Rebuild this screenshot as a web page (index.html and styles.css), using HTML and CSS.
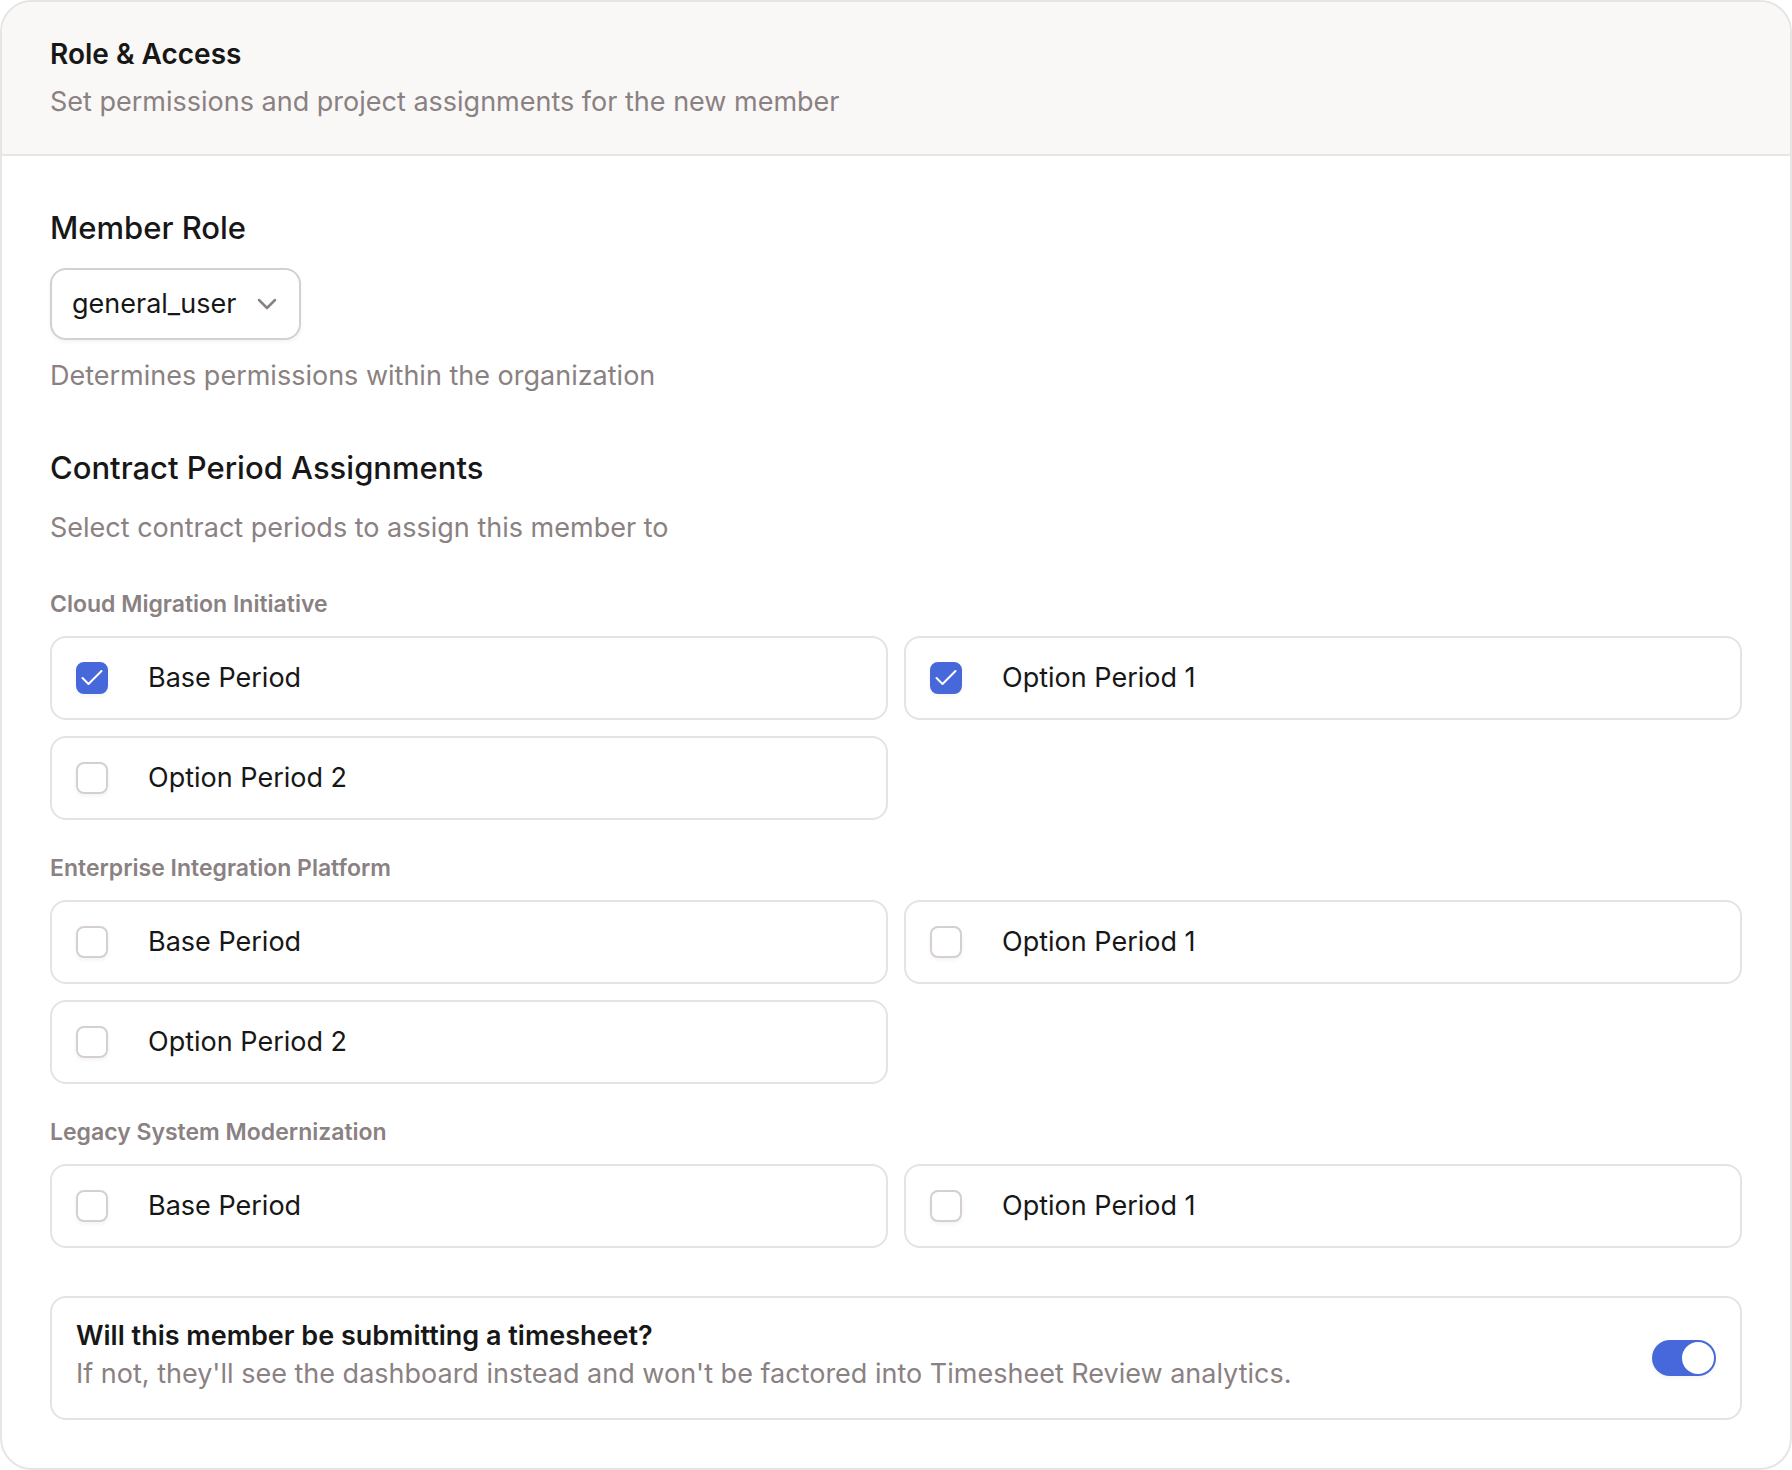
FILE: index.html
```html
<!DOCTYPE html>
<html lang="en">
<head>
  <meta charset="UTF-8">
  <meta name="viewport" content="width=device-width, initial-scale=1.0">
  <title>Role &amp; Access</title>
  <link rel="stylesheet" href="styles.css">
</head>
<body>
  <form class="card">
    <header class="card-header">
      <h1>Role &amp; Access</h1>
      <p class="hint">Set permissions and project assignments for the new member</p>
    </header>

    <div class="card-body">
      <section class="field">
        <label class="heading" for="role">Member Role</label>
        <div class="select">
          <select id="role">
            <option selected>general_user</option>
          </select>
          <svg class="chevron" viewBox="0 0 24 24" aria-hidden="true"><path d="M4 8l8 8 8-8"/></svg>
        </div>
        <p class="hint">Determines permissions within the organization</p>
      </section>

      <section class="assignments">
        <div class="field">
          <h2 class="heading">Contract Period Assignments</h2>
          <p class="hint">Select contract periods to assign this member to</p>
        </div>

        <div class="projects">
          <fieldset>
            <legend>Cloud Migration Initiative</legend>
            <div class="periods">
              <label class="period">
                <span class="check">
                  <input type="checkbox" checked>
                  <svg viewBox="0 0 32 32" aria-hidden="true"><path d="M6.5 16l6 6 13-13"/></svg>
                </span>
                Base Period
              </label>
              <label class="period">
                <span class="check">
                  <input type="checkbox" checked>
                  <svg viewBox="0 0 32 32" aria-hidden="true"><path d="M6.5 16l6 6 13-13"/></svg>
                </span>
                Option Period 1
              </label>
              <label class="period">
                <span class="check"><input type="checkbox"></span>
                Option Period 2
              </label>
            </div>
          </fieldset>

          <fieldset>
            <legend>Enterprise Integration Platform</legend>
            <div class="periods">
              <label class="period">
                <span class="check"><input type="checkbox"></span>
                Base Period
              </label>
              <label class="period">
                <span class="check"><input type="checkbox"></span>
                Option Period 1
              </label>
              <label class="period">
                <span class="check"><input type="checkbox"></span>
                Option Period 2
              </label>
            </div>
          </fieldset>

          <fieldset>
            <legend>Legacy System Modernization</legend>
            <div class="periods">
              <label class="period">
                <span class="check"><input type="checkbox"></span>
                Base Period
              </label>
              <label class="period">
                <span class="check"><input type="checkbox"></span>
                Option Period 1
              </label>
            </div>
          </fieldset>
        </div>
      </section>

      <div class="timesheet">
        <div class="timesheet-text">
          <label for="timesheet">Will this member be submitting a timesheet?</label>
          <p class="hint" id="timesheet-hint">If not, they'll see the dashboard instead and won't be factored into Timesheet Review analytics.</p>
        </div>
        <input class="switch" type="checkbox" role="switch" id="timesheet" aria-describedby="timesheet-hint" checked>
      </div>
    </div>
  </form>
</body>
</html>
```
FILE: styles.css
```css
* {
  box-sizing: border-box;
}
body {
  margin: 0;
  font-family: Inter, "Liberation Sans", sans-serif;
  font-size: 27px;
  line-height: 40px;
  color: #171717;
  background: white;
}
h1, h2, p {
  margin: 0;
}
.card {
  border: 2px solid #e7e4e4;
  border-radius: 32px;
  overflow: hidden;
}
.card-header {
  display: flex;
  flex-direction: column;
  gap: 8px;
  padding: 32px 48px;
  background: #f9f8f6;
  border-bottom: 2px solid #e7e4e4;
}
.card-header h1 {
  font-size: 28px;
  font-weight: 600;
}
.hint {
  color: #8a8182;
}
.card-body {
  display: flex;
  flex-direction: column;
  gap: 48px;
  padding: 48px;
}

/* Role select */
.field {
  display: flex;
  flex-direction: column;
  align-items: flex-start;
  gap: 16px;
}
.heading {
  font-size: 31px;
  font-weight: 500;
  line-height: 48px;
}
.select {
  position: relative;
}
.select select {
  appearance: none;
  height: 72px;
  padding: 0 62px 0 20px;
  font: inherit;
  color: inherit;
  background: white;
  border: 2px solid #d6cfd1;
  border-radius: 16px;
  box-shadow: 0 2px 4px rgba(0, 0, 0, 0.05);
  cursor: pointer;
}
.chevron {
  position: absolute;
  top: 24px;
  right: 22px;
  width: 24px;
  height: 24px;
  fill: none;
  stroke: #8a8182;
  stroke-width: 2.5;
  stroke-linecap: round;
  stroke-linejoin: round;
  pointer-events: none;
}

/* Contract periods */
.assignments {
  display: flex;
  flex-direction: column;
  gap: 40px;
}
.projects {
  display: flex;
  flex-direction: column;
  gap: 32px;
}
fieldset {
  min-width: 0;
  margin: 0;
  padding: 0;
  border: none;
}
legend {
  padding: 0;
  margin-bottom: 16px;
  font-size: 23px;
  font-weight: 600;
  line-height: 32px;
  color: #8a8182;
}
.periods {
  display: grid;
  grid-template-columns: 1fr 1fr;
  gap: 16px;
}
.period {
  display: flex;
  align-items: center;
  gap: 40px;
  padding: 20px 24px;
  border: 2px solid #e7e2e3;
  border-radius: 16px;
  cursor: pointer;
}
.check {
  position: relative;
  display: flex;
}
.check input {
  appearance: none;
  width: 32px;
  height: 32px;
  margin: 0;
  border: 2px solid #d6cfd1;
  border-radius: 8px;
  box-shadow: 0 2px 4px rgba(0, 0, 0, 0.05);
}
.check input:checked {
  background: #4768db;
  border-color: #4768db;
}
.check svg {
  display: none;
  position: absolute;
  inset: 0;
  fill: none;
  stroke: white;
  stroke-width: 2;
  stroke-linecap: round;
  stroke-linejoin: round;
  pointer-events: none;
}
.check input:checked + svg {
  display: block;
}

/* Timesheet switch */
.timesheet {
  display: flex;
  justify-content: space-between;
  align-items: center;
  gap: 24px;
  padding: 24px;
  border: 2px solid #e7e2e3;
  border-radius: 16px;
}
.timesheet-text {
  display: flex;
  flex-direction: column;
  gap: 4px;
}
.timesheet-text label {
  font-weight: 600;
  line-height: 28px;
}
.switch {
  appearance: none;
  flex-shrink: 0;
  display: flex;
  width: 64px;
  height: 36px;
  margin: 0;
  padding: 2px;
  background: #d6cfd1;
  border-radius: 18px;
  box-shadow: 0 2px 4px rgba(0, 0, 0, 0.05);
  cursor: pointer;
}
.switch::before {
  content: "";
  width: 32px;
  height: 32px;
  background: white;
  border-radius: 50%;
}
.switch:checked {
  justify-content: flex-end;
  background: #4768db;
}
```
